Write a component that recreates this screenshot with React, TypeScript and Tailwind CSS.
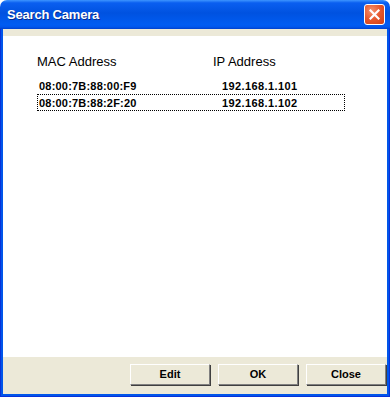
import React from "react";

const rows = [
  { mac: "08:00:7B:88:00:F9", ip: "192.168.1.101" },
  { mac: "08:00:7B:88:2F:20", ip: "192.168.1.102" },
];

const CloseIcon = () => (
  <svg width="11" height="11" viewBox="0 0 11 11">
    <path d="M1.5 1.5 L9.5 9.5 M9.5 1.5 L1.5 9.5" stroke="#fff" strokeWidth="2.2" strokeLinecap="square" />
  </svg>
);

const Button: React.FC<{ label: string }> = ({ label }) => (
  <button className="h-[21px] w-[80px] border border-t-white border-l-white border-r-[#808080] border-b-[#808080] bg-[#ece9d8] text-[11px] font-bold text-black shadow-[1px_1px_0_#404040] [font-family:'Liberation_Sans',Arial,sans-serif]">
    {label}
  </button>
);

export default function App() {
  return (
    <div className="flex h-[397px] w-[390px] flex-col bg-white [font-family:'Liberation_Sans',Arial,sans-serif]">
      <div className="flex h-[29px] items-center justify-between rounded-t-[7px] bg-[linear-gradient(180deg,#3d95ff_0%,#0a5ff0_10%,#0052e0_45%,#005cf2_85%,#0056ec_93%,#0040cc_100%)] pl-[7px] pr-[5px]">
        <span className="text-[13px] font-bold tracking-[-0.2px] text-white [text-shadow:1px_1px_0_#0a2a8a]">
          Search Camera
        </span>
        <div className="flex h-[21px] w-[21px] items-center justify-center rounded-[3px] border border-white bg-[radial-gradient(circle_at_35%_30%,#f5926e_0%,#e6572c_50%,#cc3e14_100%)]">
          <CloseIcon />
        </div>
      </div>
      <div className="flex flex-1 flex-col bg-[#0055ea] px-[3px] pb-[3px] shadow-[inset_1px_0_0_#0831d9,inset_-1px_0_0_#0831d9,inset_0_-1px_0_#0831d9]">
        <div className="flex flex-1 flex-col bg-[#ece9d8] pt-[7px]">
          <div className="flex flex-1 flex-col bg-white pl-[34px] pt-[18px]">
            <div className="flex h-[16px] items-center text-[13px] text-black">
              <span className="w-[176px]">MAC Address</span>
              <span>IP Address</span>
            </div>
            <div className="mt-[7px] flex flex-col">
              {rows.map((r, i) => (
                <div
                  key={r.mac}
                  className={`flex h-[17px] w-[308px] items-center border border-dotted pl-[1px] pt-[1px] text-[11px] font-bold tracking-[0.2px] text-black ${
                    i === 1 ? "border-black" : "border-transparent"
                  }`}
                >
                  <span className="w-[183px]">{r.mac}</span>
                  <span className="tracking-[0.4px]">{r.ip}</span>
                </div>
              ))}
            </div>
          </div>
          <div className="flex h-[37px] items-start justify-end gap-[8px] pr-[1px] pt-[7px]">
            <Button label="Edit" />
            <Button label="OK" />
            <Button label="Close" />
          </div>
        </div>
      </div>
    </div>
  );
}
